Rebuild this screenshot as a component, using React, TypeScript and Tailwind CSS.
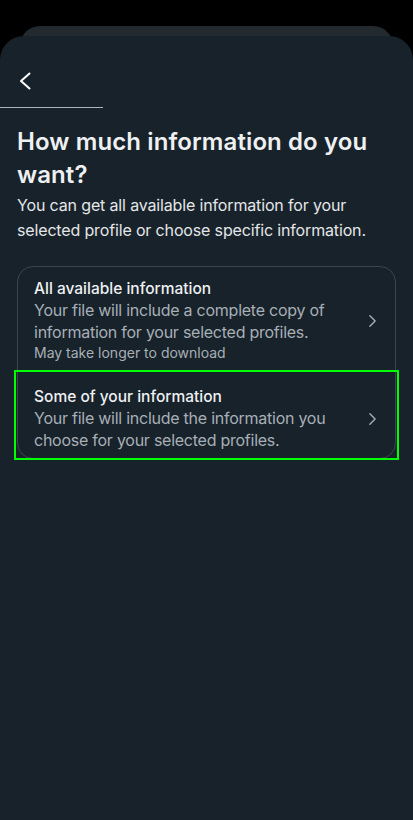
import React from "react";

const Chevron = ({ className }: { className?: string }) => (
  <svg viewBox="0 0 10 16" className={className} fill="none" stroke="currentColor" strokeWidth="1.6" strokeLinecap="round" strokeLinejoin="round">
    <path d="M2 2l6 6-6 6" />
  </svg>
);

export default function App() {
  return (
    <div className="relative w-[413px] h-[820px] overflow-hidden bg-black" style={{ fontFamily: "Inter, 'Noto Sans', sans-serif" }}>
      <div className="mt-[26px] mx-[20px] h-[20px] rounded-t-[20px] bg-[#22292f]" />
      <div className="-mt-[10px] h-[784px] rounded-t-[24px] bg-[#18222a]">
        <div className="pt-[36px] pl-[19px] h-[71px]">
          <svg viewBox="0 0 12 18" className="w-[12px] h-[18px] text-white" fill="none" stroke="currentColor" strokeWidth="2" strokeLinecap="round" strokeLinejoin="round">
            <path d="M10.5 1.5L2 9l8.5 7.5" />
          </svg>
        </div>
        <div className="w-[103px] h-[1px] bg-[#aeb3b8]" />
        <div className="px-[17px] pt-[17px]">
          <h1 className="text-[24px] leading-[33px] font-semibold text-[#eef0f2] tracking-[0.1px]">
            How much information do you want?
          </h1>
          <p className="mt-[2px] text-[16px] leading-[25px] text-[#e4e6e9] tracking-[-0.15px]">
            You can get all available information for your selected profile or choose specific information.
          </p>
          <div className="relative mt-[23px] rounded-[16px] border border-[#3a464f]">
            <div className="flex items-center pl-[16px] pr-[18px] pt-[12px] pb-[12px]">
              <div className="flex-1">
                <div className="text-[15.5px] leading-[20px] font-medium text-[#eef0f2]">All available information</div>
                <div className="text-[16px] leading-[22px] text-[#a7afb7] tracking-[-0.25px]">
                  Your file will include a complete copy of information for your selected profiles.
                </div>
                <div className="text-[14px] leading-[19px] text-[#a7afb7]">May take longer to download</div>
              </div>
              <Chevron className="w-[9px] h-[14px] text-[#a7afb7] ml-[10px]" />
            </div>
            <div className="flex items-center pl-[16px] pr-[18px] pt-[13px] pb-[7px]">
              <div className="flex-1">
                <div className="text-[15.5px] leading-[20px] font-medium text-[#eef0f2]">Some of your information</div>
                <div className="text-[16px] leading-[22px] text-[#a7afb7] tracking-[-0.25px]">
                  Your file will include the information you choose for your selected profiles.
                </div>
              </div>
              <Chevron className="w-[9px] h-[14px] text-[#a7afb7] ml-[10px]" />
            </div>
            <div className="absolute left-[-4px] right-[-4px] top-[103px] bottom-[-2px] border-2 border-[#00ff00]" />
          </div>
        </div>
      </div>
    </div>
  );
}
